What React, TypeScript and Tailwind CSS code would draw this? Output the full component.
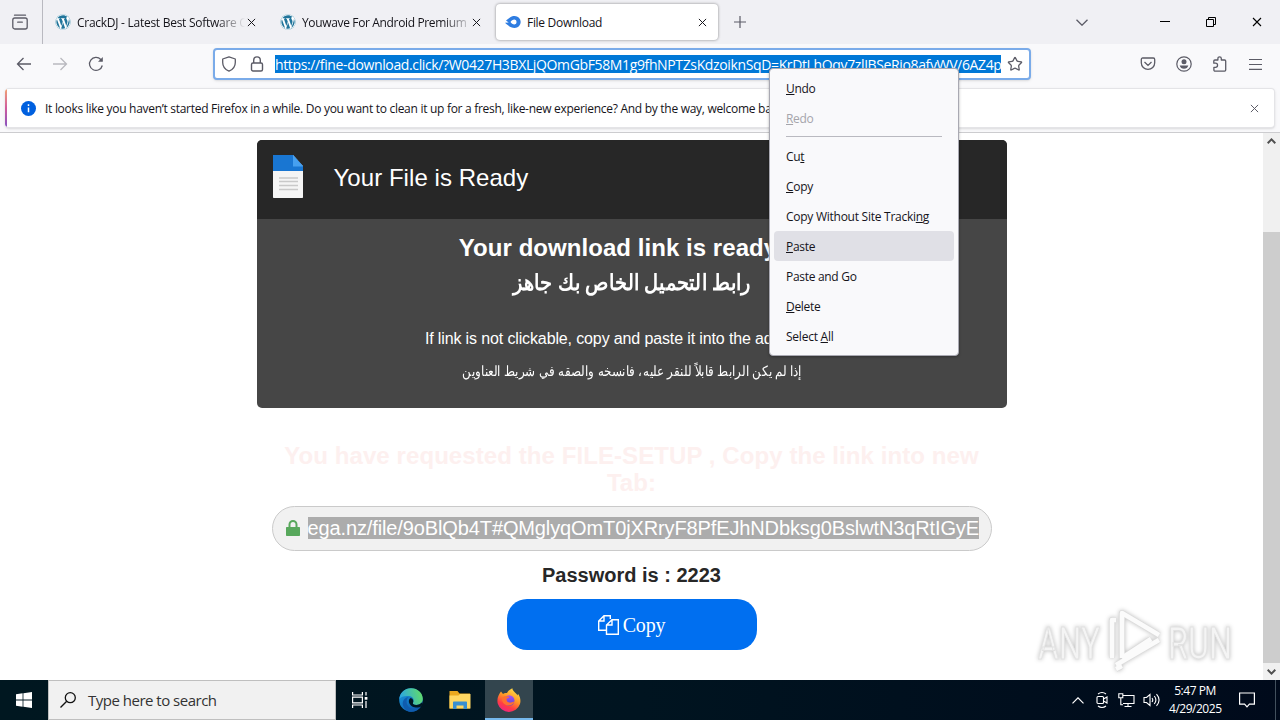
import React from 'react';
import { Star } from 'lucide-react';
import { FaWordpress } from 'react-icons/fa6';

function CloseIcon({ className = '' }: { className?: string }) {
  return (
    <svg viewBox="0 0 10 10" className={`shrink-0 ${className}`} stroke="currentColor" fill="none">
      <path d="M1 1l8 8M9 1L1 9" strokeWidth="1.1" />
    </svg>
  );
}

function WordPressIcon() {
  return <FaWordpress className="h-4 w-4 shrink-0 rounded-full bg-white text-[#21759b]" />;
}

function TabBar() {
  return (
    <div className="flex h-11 items-center bg-[#f0f0f4] text-[12px] text-[#15141a]">
      <div className="flex h-full w-[43px] shrink-0 items-center border-r border-[#b9b9c0] pl-3">
        <svg viewBox="0 0 16 16" className="h-4 w-4 text-[#5b5b66]" fill="none" stroke="currentColor" strokeWidth="1.3">
          <path d="M2.5 1.2h11" strokeLinecap="round" />
          <rect x=".8" y="4" width="14.4" height="11" rx="2" />
          <path d="M5.7 8.2h4.6" strokeLinecap="round" />
        </svg>
      </div>
      <div className="flex w-[225px] shrink-0 items-center pl-3">
        <WordPressIcon />
        <div className="ml-1.5 w-[168px] overflow-hidden pt-0.5 whitespace-nowrap tracking-[-0.27px] [mask-image:linear-gradient(to_right,#000_140px,transparent_168px)]">
          CrackDJ - Latest Best Software Collection
        </div>
        <CloseIcon className="ml-0.5 h-[9px] w-[9px]" />
      </div>
      <div className="flex w-[228px] shrink-0 items-center pl-3">
        <WordPressIcon />
        <div className="ml-1.5 w-[168px] overflow-hidden pt-0.5 whitespace-nowrap tracking-[-0.35px] [mask-image:linear-gradient(to_right,#000_140px,transparent_172px)]">
          Youwave For Android Premium
        </div>
        <CloseIcon className="ml-0.5 h-[9px] w-[9px]" />
      </div>
      <div className="flex h-9 w-[222px] shrink-0 items-center rounded bg-white pl-[9px] shadow-[0_0_3px_rgba(0,0,0,0.45)]">
        <svg viewBox="0 0 16 12" className="h-3 w-4 shrink-0" fill="#2f7de1">
          <path fillRule="evenodd" d="M4 2.2C5.700 .6 7.600 0 9.700 0a6 6 0 0 1 0 12C7.300 12 4.800 11 3 9.200 1.800 8.500.7 7.700 0 6.700l3.700-.3L1 4.600zM9.500 3.400C7.800 3.400 6.300 4.600 5.500 6c.9 1.500 2.300 2.500 4 2.500a2.600 2.600 0 0 0 0-5.100z" />
        </svg>
        <div className="ml-1.5 w-[171px] pt-0.5 tracking-[-0.3px]">File Download</div>
        <CloseIcon className="h-[9px] w-[9px]" />
      </div>
      <svg viewBox="0 0 12 12" className="ml-4 h-3 w-3 shrink-0" stroke="#5b5b66" strokeWidth="1.200"><path d="M6 0v12M0 6h12" /></svg>
      <div className="flex-1" />
      <svg viewBox="0 0 12 7" className="mr-[72px] h-[7px] w-3 shrink-0" fill="none" stroke="#5b5b66" strokeWidth="1.300"><path d="M.5.700 6 6.200 11.500.7" /></svg>
      <svg viewBox="0 0 10 10" className="mr-9 h-[10px] w-[10px] shrink-0" stroke="#000"><path d="M0 4.500h10" /></svg>
      <svg viewBox="0 0 10 10" className="mr-9 h-[10px] w-[10px] shrink-0" stroke="#000" fill="none"><path d="M.5 2.500h7v7h-7zM2.500 2.500v-2h7v7h-2" /></svg>
      <CloseIcon className="mr-[18px] h-[10px] w-[10px] text-black" />
    </div>
  );
}

const pageUrl = 'https://fine-download.click/?W0427H3BXLjQOmGbF58M1g9fhNPTZsKdzoiknSqD=KrDtLhQqv7zlJBSeRio8afyWV/6AZ4p';

function Toolbar() {
  return (
    <div className="flex h-[41px] items-center bg-[#f9f9fb] pb-px text-[#5b5b66]">
      <svg viewBox="0 0 16 14" className="ml-4 h-[14px] w-4 shrink-0" fill="none" stroke="currentColor" strokeWidth="1.300"><path d="M15 7H1.500M7.500 1l-6 6 6 6" /></svg>
      <svg viewBox="0 0 16 14" className="ml-5 h-[14px] w-4 shrink-0 opacity-40" fill="none" stroke="currentColor" strokeWidth="1.300"><path d="M1 7h13.500M8.500 1l6 6-6 6" /></svg>
      <svg viewBox="0 0 16 16" className="ml-5 h-4 w-4 shrink-0" fill="none" stroke="currentColor" strokeWidth="1.300">
        <path d="M14.300 9.500A6.500 6.500 0 1 1 12.800 3.500L14 4.700" />
        <path d="M14.800 1v4.800H10z" fill="currentColor" stroke="none" />
      </svg>
      <div className="ml-[109px] flex h-8 w-[818px] shrink-0 items-center rounded-[4px] border-2 border-[#7aabe9] bg-white pl-1.5 shadow-sm">
        <svg viewBox="0 0 16 16" className="h-4 w-4 shrink-0" fill="none" stroke="currentColor" strokeWidth="1.300" strokeLinejoin="round">
          <path d="M8 .8 14.300 3v3.500c0 4-2.300 7-6.300 8.700C4 13.500 1.700 10.500 1.700 6.500V3z" />
        </svg>
        <svg viewBox="0 0 14 16" className="ml-[13px] h-4 w-3.5 shrink-0" fill="none" stroke="currentColor" strokeWidth="1.400">
          <rect x="1.500" y="7" width="11" height="8" rx="1.500" />
          <path d="M3.700 7V4.200a3.300 3.300 0 0 1 6.600 0V7" />
        </svg>
        <div className="ml-[11px] h-[18px] w-[726px] shrink-0 overflow-hidden whitespace-nowrap bg-[#0078d7] text-[14px] leading-[19px] tracking-[-0.365px] text-white">
          {pageUrl}
        </div>
        <Star className="ml-1.5 h-4 w-4 shrink-0" strokeWidth={1.9} />
      </div>
      <div className="flex-1" />
      <div className="flex items-center gap-5 pr-[18px]">
        <svg viewBox="0 0 16 16" className="h-4 w-4" fill="none" stroke="currentColor" strokeWidth="1.300">
          <path d="M2.700 2h10.600c.8 0 1.400.600 1.400 1.400v3.300a6.700 6.700 0 0 1-13.400 0V3.400C1.300 2.600 1.900 2 2.700 2zM4.500 6 8 9.400 11.500 6" />
        </svg>
        <svg viewBox="0 0 16 16" className="h-4 w-4" fill="currentColor">
          <circle cx="8" cy="8" r="7.200" fill="none" stroke="currentColor" strokeWidth="1.200" />
          <circle cx="8" cy="5.700" r="2.500" />
          <path d="M3.700 9.500h8.600c-.5 2-2 3.300-4.300 3.300s-3.800-1.300-4.300-3.300z" />
        </svg>
        <svg viewBox="0 0 16 16" className="h-4 w-4" fill="none" stroke="currentColor" strokeWidth="1.300" strokeLinejoin="round">
          <path d="M1.800 7.200V5.100c0-.6.500-1.100 1.100-1.100h3V2.500a1.700 1.700 0 0 1 3.400 0V4h3.300c.6 0 1.100.5 1.100 1.100v9c0 .6-.5 1.100-1.100 1.100H3c-.6 0-1.100-.5-1.100-1.100v-2.800h1.600a2 2 0 0 0 0-4.100z" />
        </svg>
        <svg viewBox="0 0 13 12" className="ml-px h-3 w-[13px]" stroke="currentColor" strokeWidth="1.200"><path d="M0 1.500h13M0 6.500h13M0 11.300h13" /></svg>
      </div>
    </div>
  );
}

function Notification() {
  return (
    <div className="h-12 border-b border-[#cccccf] bg-[#f9f9fb] px-[5px] pt-[3px]">
      <div className="flex h-[40px] overflow-hidden rounded border border-l-0 border-[#e4e4e7] bg-white shadow-sm">
        <div className="w-0.5 shrink-0 bg-linear-to-b from-[#f0a070] via-[#d05a9c] to-[#8750bf]" />
        <div className="flex min-w-0 flex-1 items-center pl-[14px] text-[12px] text-[#15141a]">
          <svg viewBox="0 0 16 16" className="h-[15px] w-[15px] shrink-0">
            <circle cx="8" cy="8" r="8" fill="#0060df" />
            <path d="M8 3.500v1.800M8 7v5" stroke="#fff" strokeWidth="1.600" />
          </svg>
          <div className="ml-[9px] w-[1190px] shrink-0 overflow-hidden pt-0.5 whitespace-nowrap tracking-[-0.29px]">
            It looks like you haven’t started Firefox in a while. Do you want to clean it up for a fresh, like-new experience? And by the way, welcome back!
          </div>
          <CloseIcon className="ml-[15px] h-[9px] w-[9px] text-[#5b5b66]" />
        </div>
      </div>
    </div>
  );
}

function FileIcon() {
  return (
    <svg viewBox="0 0 32 44" className="mb-px h-11 w-8 shrink-0">
      <path d="M1 0h20l10 11v31c0 .7-.3 1-1 1H2c-.7 0-1-.3-1-1z" fill="#f5f5f5" />
      <path d="M1 0h20l10 11v5H1z" fill="#1976d2" />
      <path d="M21 0l10 11.500H21z" fill="#46a0f0" />
      <path d="M7 23h19M7 26.500h19M7 30.500h19M7 34.500h19" stroke="#c9c9c9" strokeWidth="1.600" />
    </svg>
  );
}

function DownloadPage() {
  return (
    <div className="flex min-h-0 flex-1 bg-white">
      <main className="flex flex-1 flex-col items-center pt-[7px] font-['Liberation_Sans',Arial,sans-serif]">
        <section className="h-[268px] w-[750px] shrink-0 overflow-hidden rounded-[5px] bg-[#464646] text-center text-white">
          <header className="flex h-[79px] items-center bg-[#272727] pb-1 pl-[15px]">
            <FileIcon />
            <h1 className="ml-[30px] text-[24px] tracking-[0.05px]">Your File is Ready</h1>
          </header>
          <h2 className="mt-[14px] pr-[27px] text-[24px] leading-[30px] font-bold tracking-[0.05px]">Your download link is ready</h2>
          <h2 dir="rtl" className="mt-[5px] scale-x-[0.88] text-[22px] leading-[30px] font-bold">رابط التحميل الخاص بك جاهز</h2>
          <p className="mt-[29px] text-[16px] leading-6 tracking-[-0.13px]">If link is not clickable, copy and paste it into the address bar</p>
          <p dir="rtl" className="mt-[8px] scale-x-[0.853] text-[14px] leading-6">إذا لم يكن الرابط قابلاً للنقر عليه، فانسخه والصقه في شريط العناوين</p>
        </section>
        <h2 className="mt-[34px] w-[720px] shrink-0 text-center text-[24px] leading-[27px] font-bold tracking-[0.08px] text-[#fdf0ef]">
          You have requested the FILE-SETUP , Copy the link into new Tab:
        </h2>
        <div className="mt-[10px] flex h-[45px] w-[720px] shrink-0 items-center rounded-full border border-[#cacaca] bg-[#f1f1f1] pb-px pl-[13px]">
          <svg viewBox="0 0 14 16" className="h-4 w-3.5 shrink-0" fill="#58a85c">
            <path d="M1 7h12c.6 0 1 .4 1 1v7c0 .6-.4 1-1 1H1c-.6 0-1-.4-1-1V8c0-.6.4-1 1-1z" />
            <path d="M3.500 8V4.500a3.500 3.500 0 0 1 7 0V8" fill="none" stroke="#58a85c" strokeWidth="2" />
          </svg>
          <div className="ml-2 w-[671px] shrink-0 overflow-hidden whitespace-nowrap bg-[#acacac] text-[20px] leading-[22px] tracking-[-0.12px] text-white">
            ega.nz/file/9oBlQb4T#QMglyqOmT0jXRryF8PfEJhNDbksg0BslwtN3qRtIGyE
          </div>
        </div>
        <p className="mt-[10px] text-[20px] leading-7 font-bold text-[#272727]">Password is : 2223</p>
        <button className="mt-[10px] flex h-[51px] w-[250px] shrink-0 items-center justify-center rounded-[20px] bg-[#006ff0] font-['Liberation_Serif',serif] text-[20px] tracking-[-0.2px] text-white">
          <svg viewBox="0 0 21 20" className="mr-1 h-5 w-[21px]" fill="none" stroke="currentColor" strokeWidth="1.400">
            <path d="M8.500 15.300H.700V6L6 .7h6.300V4M6 .7V6H.7" />
            <path d="M14 4.700h6.300v14.600H8.500V10zM14 4.700V10H8.500" />
          </svg>
          Copy
        </button>
      </main>
      <div className="flex w-[17px] shrink-0 flex-col items-center bg-[#f0f0f0]">
        <svg viewBox="0 0 9 6" className="mt-[5px] h-1.5 w-[9px]" fill="none" stroke="#505050" strokeWidth="2"><path d="M.7 5.200 4.500 1.400 8.300 5.200" /></svg>
        <div className="mt-[88px] w-full flex-1 bg-[#cdcdcd]" />
        <svg viewBox="0 0 9 6" className="mt-1.5 mb-[5px] h-1.5 w-[9px]" fill="none" stroke="#505050" strokeWidth="2"><path d="M.7.800 4.500 4.600 8.300.8" /></svg>
      </div>
    </div>
  );
}

function ContextMenu() {
  return (
    <div className="absolute top-[68px] left-[769px] h-[288px] w-[190px] rounded border border-[#a9a9b2] bg-[#f9f9fb] px-1 pt-1 text-[12px] leading-[31px] text-[#15141a] shadow-[0_1px_3px_rgba(0,0,0,0.3)] tracking-[-0.3px]">
      <div className="h-[30px] pl-3"><u>U</u>ndo</div>
      <div className="h-[30px] pl-3 text-[#a5a5ab]"><u>R</u>edo</div>
      <div className="mx-3 mt-[3px] mb-1 h-px bg-[#b9b9c0]" />
      <div className="h-[30px] pl-3 leading-[32px]">Cu<u>t</u></div>
      <div className="h-[30px] pl-3 leading-[32px]"><u>C</u>opy</div>
      <div className="h-[30px] pl-3 leading-[32px] tracking-[-0.26px] whitespace-nowrap">Copy Without Site Tracki<u>n</u>g</div>
      <div className="h-[30px] rounded-sm bg-[#e0e0e6] pl-3 leading-[32px]"><u>P</u>aste</div>
      <div className="h-[30px] pl-3 leading-[32px]">Paste and Go</div>
      <div className="h-[30px] pl-3 leading-[32px]"><u>D</u>elete</div>
      <div className="h-[30px] pl-3 leading-[32px] tracking-[-0.24px]">Select <u>A</u>ll</div>
    </div>
  );
}

function Watermark() {
  return (
    <svg viewBox="0 0 200 66" className="absolute top-[607px] left-[1036px] h-[66px] w-[200px] drop-shadow-[0_0_2px_rgba(0,0,0,0.25)]" fontFamily="Roboto, sans-serif" fontSize="45">
      <g fill="#f4f4f4" stroke="#e2e2e2" strokeWidth="1">
        <text x="2" y="52" textLength="62" lengthAdjust="spacingAndGlyphs">ANY</text>
        <text x="132" y="52" textLength="64" lengthAdjust="spacingAndGlyphs">RUN</text>
      </g>
      <g fill="none" strokeLinejoin="round">
        <path d="M76 51V13h4M86 51V6l37 22M123 33 80 58M86 51l29-19M80 62l6-3" stroke="#dcdcdc" strokeWidth="6" />
        <path d="M76 51V13h4M86 51V6l37 22M123 33 80 58M86 51l29-19M80 62l6-3" stroke="#fbfbfb" strokeWidth="4.500" />
      </g>
    </svg>
  );
}

function EdgeIcon() {
  return (
    <svg viewBox="0 0 24 24" className="h-6 w-6">
      <defs>
        <linearGradient id="edgeTop" x1="0" y1=".5" x2="1" y2=".3"><stop stopColor="#2aa5e5" /><stop offset="1" stopColor="#62dc68" /></linearGradient>
        <linearGradient id="edgeSide" x1="0" y1="0" x2="1" y2="1"><stop stopColor="#1b9de2" /><stop offset="1" stopColor="#0b4ba0" /></linearGradient>
      </defs>
      <circle cx="12" cy="12" r="11.800" fill="url(#edgeSide)" />
      <path d="M.3 11C1 4.500 6 .2 12 .2c7 0 11.800 5 11.800 10.600 0 4-3 6.200-6.500 6.200-2.600 0-4-1-3.300-2.200 1.700-3 0-6.600-4.500-6.800C5.500 7.700 1.500 8.800.3 11z" fill="url(#edgeTop)" />
      <path d="M9.700 9C6 11.500 7 20 14.500 21c3 .4 5.500-.5 7.500-2.500-3 5-9 6.500-13.500 4.500C1.500 19 2.500 10 9.700 9z" fill="#0f5cae" />
      <path d="M14 14.800c-.6 1.300.7 2.200 3.300 2.200 2.400 0 4.200-.8 5.400-2.400 1.200 1.700.5 3-.7 3.900-3 2-10 1.500-12-4-.5-2 .2-3.800 1.700-4.500 2.200.6 3.200 2.700 2.300 4.800z" fill="#001722" />
    </svg>
  );
}

function FirefoxIcon() {
  return (
    <svg viewBox="0 0 24 24" className="h-6 w-6">
      <defs>
        <linearGradient id="fox" x1=".8" y1="0" x2=".3" y2="1"><stop stopColor="#ffe34a" /><stop offset=".45" stopColor="#ff9526" /><stop offset=".75" stopColor="#ff3b45" /><stop offset="1" stopColor="#ef2485" /></linearGradient>
        <linearGradient id="globe" x1="0" y1="0" x2="0" y2="1"><stop stopColor="#a951f5" /><stop offset="1" stopColor="#5347d2" /></linearGradient>
      </defs>
      <path d="M4 3.500 6 6c1-1 2.500-1.300 4-1C11 3 13 1.200 15.300.2c.2 2.300 2 3.500 3.700 5.300.8.900 1.200 1.400 1.500 2L21 5.800c2.300 3 3 7 2 10.300A11.700 11.700 0 0 1 .8 15.700C-.5 11 1.500 6.500 4 3.500z" fill="url(#fox)" />
      <circle cx="12.200" cy="12.500" r="5.300" fill="url(#globe)" />
      <path d="M5 9.500c2-1.500 4-1.700 7.500-.7-.4 1-1.300 1.500-2.700 1.800-.8 2 .5 4 3 4 2 0 3-1.300 4.500-.8-1 2.700-3.300 4-5.800 3.800C7.500 17.300 4.500 14 5 9.500z" fill="#ff7030" />
    </svg>
  );
}

function Taskbar() {
  return (
    <footer className="flex h-10 shrink-0 items-center bg-linear-to-r from-[#001720] via-[#001420] to-[#000a1b] text-white">
      <div className="flex w-12 shrink-0 justify-center">
        <svg viewBox="0 0 16 16" className="h-4 w-4" fill="#fff"><path d="M0 2.200 6.600 1.300V7.600H0zM7.400 1.200 16 0v7.600H7.400zM0 8.400h6.600v6.300L0 13.800zM7.400 8.400H16V16l-8.600-1.200z" /></svg>
      </div>
      <div className="flex h-10 w-[288px] shrink-0 items-center border border-[#bfbfbf] bg-[#f1f1f1] pl-[11px] text-[15px] text-[#333]">
        <svg viewBox="0 0 16 16" className="h-4 w-4" fill="none" stroke="#111" strokeWidth="1.300"><circle cx="10.300" cy="5.700" r="5" /><path d="M6.700 9.300.5 15.500" /></svg>
        <span className="ml-3 pt-px tracking-[-0.5px]">Type here to search</span>
      </div>
      <div className="flex w-12 shrink-0 justify-center">
        <svg viewBox="0 0 16 16" className="h-4 w-4" fill="none" stroke="#fff" strokeWidth="1.200">
          <path d="M.6 0v3h9.800V0M.6 16v-3h9.800v3M.6 5.200h9.800v5.600H.600zM14 0v3.500M14 9v7" /><path d="M12.700 5h2.700v2.700h-2.700z" fill="#fff" stroke="none" />
        </svg>
      </div>
      <div className="flex w-[54px] shrink-0 justify-center"><EdgeIcon /></div>
      <div className="flex w-[44px] shrink-0 justify-center">
        <svg viewBox="0 0 22 20" className="h-5 w-[22px]">
          <path d="M.5 1h8l2 2.500H21v15H.5z" fill="#eaa81f" /><path d="M.5 5.500h9L11 4h10.500v14.500H.5z" fill="#ffd762" />
          <path d="M4 19v-6.500c0-.7.500-1 1-1h12c.6 0 1 .3 1 1V19h-3.500v-3.500h-7V19z" fill="#398fd0" />
        </svg>
      </div>
      <div className="ml-[3px] flex h-10 w-12 shrink-0 items-center justify-center border-b-2 border-[#76b9ed] bg-[#33454e] pt-px"><FirefoxIcon /></div>
      <div className="flex-1" />
      <svg viewBox="0 0 12 7" className="mr-3 h-[7px] w-3" fill="none" stroke="#fff" strokeWidth="1.200"><path d="M.5 6.300 6 .8l5.500 5.500" /></svg>
      <svg viewBox="0 0 12 16" className="mr-[10px] h-4 w-3" fill="none" stroke="#fff" strokeWidth="1.100"><rect x="1" y="4.500" width="6.500" height="7" rx="1" /><path d="M7.500 7 11 5v6L7.500 9M2 2C4.500.2 7.500.2 10 2M2 14c2.500 1.800 5.500 1.800 8 0" /></svg>
      <svg viewBox="0 0 17 14" className="mr-2 h-3.5 w-[17px]" fill="none" stroke="#fff" strokeWidth="1.100"><path d="M5 2.500h11v8H5M6.500 13.500h7M10 10.500v3M.8.800h4v4h-4zM2.800 4.800v7H5" /></svg>
      <svg viewBox="0 0 17 14" className="mr-[9px] h-3.5 w-[17px]" fill="none" stroke="#fff" strokeWidth="1.100"><path d="M1 4.500h2.500L7 1.500v11L3.500 9.500H1zM9 5c1 1.300 1 2.700 0 4M11.300 3c2 2.500 2 5.500 0 8M13.500 1.200c3.200 3.600 3.200 8 0 11.600" /></svg>
      <div className="w-[52px] text-center text-[12px] leading-[18px] whitespace-nowrap tracking-[-0.04em]">
        <div>5:47 PM</div>
        <div>4/29/2025</div>
      </div>
      <svg viewBox="0 0 16 16" className="mr-5 ml-[18px] h-4 w-4" fill="none" stroke="#fff" strokeWidth="1.200"><path d="M.6 1h14.800v11.200h-5L8 14.800l-2.400-2.600h-5z" /></svg>
      <div className="mr-1 h-10 w-px bg-[#42505d]" />
    </footer>
  );
}

export default function App() {
  return (
    <div className="relative flex h-[720px] w-[1280px] flex-col overflow-hidden bg-white font-['Open_Sans','Noto_Sans',sans-serif]">
      <TabBar />
      <Toolbar />
      <Notification />
      <DownloadPage />
      <Taskbar />
      <Watermark />
      <ContextMenu />
    </div>
  );
}
